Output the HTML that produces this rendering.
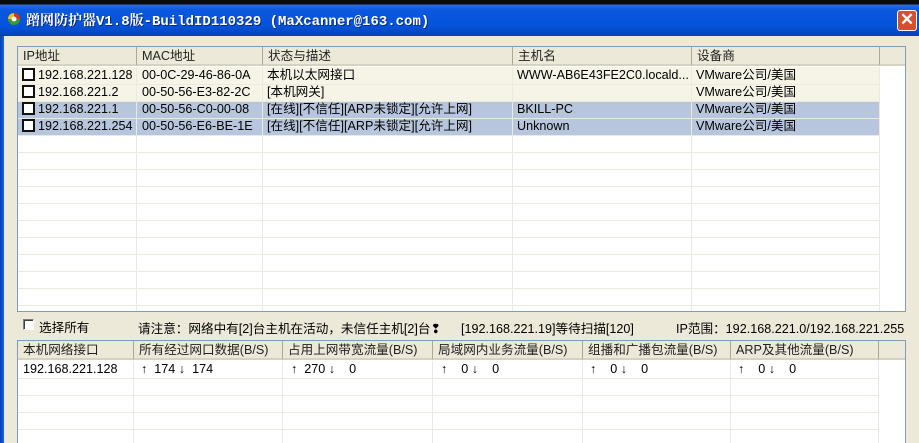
<!DOCTYPE html>
<html><head><meta charset="utf-8"><style>
*{margin:0;padding:0;box-sizing:border-box}
html,body{width:919px;height:443px;overflow:hidden}
body{background:#ECE9D8;position:relative;font-family:"Liberation Sans","Noto Sans CJK SC",sans-serif;font-size:12.6px;color:#000}
.a{position:absolute}
.title{left:0;top:0;width:919px;height:36px;background:linear-gradient(#0A0A0A 0,#0A0A0A 4px,#2B6BE0 5px,#0A58E0 10px,#0553DA 26px,#0445C0 34px,#0C3FA8 36px)}
.lb{left:0;top:36px;width:4px;height:407px;background:linear-gradient(90deg,#0340B8,#1C62D8)}
.tt{left:26px;top:10px;color:#fff;font-family:"Liberation Mono","Noto Serif CJK SC",monospace;font-weight:bold;font-size:14px;text-shadow:1px 1px #0A2A7A;white-space:nowrap}
.close{left:897px;top:10px;width:20px;height:21px;background:#D4502E;border:1px solid #fff;border-radius:3px;color:#fff;font-size:17px;line-height:18px;text-align:center;font-weight:bold}
.list{background:#fff;border:1px solid #7F9DB9}
.hd{position:absolute;height:19px;background:#ECE9D8;border-right:1px solid #ACA899;border-bottom:2px solid #D6D2C2;padding-left:5px;line-height:18px;white-space:nowrap;color:#222}
.row{position:absolute;height:17px;line-height:17px;white-space:nowrap}
.c{position:absolute;top:0;overflow:hidden}
.vl{position:absolute;width:1px;background:#ECE9E0}
.hl{position:absolute;height:1px;background:#ECE9E0}
.cb{display:inline-block;width:13px;height:13px;border:2px solid #111;vertical-align:-2px;margin-right:3px;background:#fff}
</style></head><body>
<div class="a title"></div>
<div class="a lb"></div>
<svg class="a" style="left:7px;top:12px" width="14" height="14"><circle cx="7" cy="7" r="6" fill="#3C9A30"/><path d="M7 1A6 6 0 0 1 13 7H7z" fill="#E03020"/><path d="M1 7A6 6 0 0 1 7 1V7z" fill="#F0C020"/><circle cx="7" cy="7" r="2.5" fill="#fff"/></svg>
<div class="a tt">蹭网防护器V1.8版-BuildID110329 (MaXcanner@163.com)</div>
<div class="a close">✕</div>

<div class="a list" style="left:17px;top:46px;width:889px;height:266px;overflow:hidden">
<div class="hd" style="left:0;top:0;width:119px">IP地址</div>
<div class="hd" style="left:119px;top:0;width:126px">MAC地址</div>
<div class="hd" style="left:245px;top:0;width:250px">状态与描述</div>
<div class="hd" style="left:495px;top:0;width:179px">主机名</div>
<div class="hd" style="left:674px;top:0;width:188px">设备商</div>
<div class="hd" style="left:862px;top:0;width:27px"></div>
<div class="a" style="left:0;top:20px;width:862px;height:34px;background:#F5F4E6"></div>
<div class="a" style="left:0;top:54px;width:862px;height:34px;background:#B8C6DD"></div>
<div class="vl" style="left:118px;top:20px;height:246px"></div>
<div class="vl" style="left:244px;top:20px;height:246px"></div>
<div class="vl" style="left:494px;top:20px;height:246px"></div>
<div class="vl" style="left:673px;top:20px;height:246px"></div>
<div class="vl" style="left:861px;top:20px;height:246px"></div>
<div class="hl" style="left:0;top:37px;width:862px"></div>
<div class="hl" style="left:0;top:54px;width:862px"></div>
<div class="hl" style="left:0;top:71px;width:862px"></div>
<div class="hl" style="left:0;top:88px;width:862px"></div>
<div class="hl" style="left:0;top:105px;width:862px"></div>
<div class="hl" style="left:0;top:122px;width:862px"></div>
<div class="hl" style="left:0;top:139px;width:862px"></div>
<div class="hl" style="left:0;top:156px;width:862px"></div>
<div class="hl" style="left:0;top:173px;width:862px"></div>
<div class="hl" style="left:0;top:190px;width:862px"></div>
<div class="hl" style="left:0;top:207px;width:862px"></div>
<div class="hl" style="left:0;top:224px;width:862px"></div>
<div class="hl" style="left:0;top:241px;width:862px"></div>
<div class="hl" style="left:0;top:258px;width:862px"></div>
<div class="row" style="left:0;top:20px"><div class="c" style="left:4px"><span class="cb"></span>192.168.221.128</div><div class="c" style="left:124px">00-0C-29-46-86-0A</div><div class="c" style="left:249px">本机以太网接口</div><div class="c" style="left:499px">WWW-AB6E43FE2C0.locald...</div><div class="c" style="left:678px">VMware公司/美国</div></div>
<div class="row" style="left:0;top:37px"><div class="c" style="left:4px"><span class="cb"></span>192.168.221.2</div><div class="c" style="left:124px">00-50-56-E3-82-2C</div><div class="c" style="left:249px">[本机网关]</div><div class="c" style="left:678px">VMware公司/美国</div></div>
<div class="row" style="left:0;top:54px"><div class="c" style="left:4px"><span class="cb"></span>192.168.221.1</div><div class="c" style="left:124px">00-50-56-C0-00-08</div><div class="c" style="left:249px">[在线][不信任][ARP未锁定][允许上网]</div><div class="c" style="left:499px">BKILL-PC</div><div class="c" style="left:678px">VMware公司/美国</div></div>
<div class="row" style="left:0;top:71px"><div class="c" style="left:4px"><span class="cb"></span>192.168.221.254</div><div class="c" style="left:124px">00-50-56-E6-BE-1E</div><div class="c" style="left:249px">[在线][不信任][ARP未锁定][允许上网]</div><div class="c" style="left:499px">Unknown</div><div class="c" style="left:678px">VMware公司/美国</div></div>
</div>

<div class="a" style="left:23px;top:319px;width:11px;height:11px;border:1px solid #7F7F7F;border-right-color:#fff;border-bottom-color:#fff;background:#fff;box-shadow:inset 1px 1px #404040"></div>
<div class="a" style="left:39px;top:317px">选择所有</div>
<div class="a" style="left:138px;top:318px;white-space:nowrap">请注意：网络中有[2]台主机在活动，未信任主机[2]台❢</div>
<div class="a" style="left:461px;top:318px;white-space:nowrap">[192.168.221.19]等待扫描[120]</div>
<div class="a" style="left:676px;top:318px;white-space:nowrap">IP范围：192.168.221.0/192.168.221.255</div>

<div class="a list" style="left:17px;top:340px;width:889px;height:110px;overflow:hidden">
<div class="hd" style="left:0;top:0;width:116px">本机网络接口</div>
<div class="hd" style="left:116px;top:0;width:149px">所有经过网口数据(B/S)</div>
<div class="hd" style="left:265px;top:0;width:150px">占用上网带宽流量(B/S)</div>
<div class="hd" style="left:415px;top:0;width:150px">局域网内业务流量(B/S)</div>
<div class="hd" style="left:565px;top:0;width:148px">组播和广播包流量(B/S)</div>
<div class="hd" style="left:713px;top:0;width:148px">ARP及其他流量(B/S)</div>
<div class="hd" style="left:861px;top:0;width:28px"></div>
<div class="vl" style="left:115px;top:20px;height:90px"></div>
<div class="vl" style="left:264px;top:20px;height:90px"></div>
<div class="vl" style="left:414px;top:20px;height:90px"></div>
<div class="vl" style="left:564px;top:20px;height:90px"></div>
<div class="vl" style="left:712px;top:20px;height:90px"></div>
<div class="vl" style="left:860px;top:20px;height:90px"></div>
<div class="hl" style="left:0;top:37px;width:861px"></div>
<div class="hl" style="left:0;top:54px;width:861px"></div>
<div class="hl" style="left:0;top:71px;width:861px"></div>
<div class="hl" style="left:0;top:88px;width:861px"></div>
<div class="hl" style="left:0;top:105px;width:861px"></div>
<div class="row" style="left:0;top:20px"><div class="c" style="left:5px">192.168.221.128</div><div class="c" style="left:123px">↑&nbsp;&nbsp;174 ↓&nbsp;&nbsp;174</div><div class="c" style="left:273px">↑&nbsp;&nbsp;270 ↓&nbsp;&nbsp;&nbsp;&nbsp;0</div><div class="c" style="left:423px">↑&nbsp;&nbsp;&nbsp;&nbsp;0 ↓&nbsp;&nbsp;&nbsp;&nbsp;0</div><div class="c" style="left:572px">↑&nbsp;&nbsp;&nbsp;&nbsp;0 ↓&nbsp;&nbsp;&nbsp;&nbsp;0</div><div class="c" style="left:720px">↑&nbsp;&nbsp;&nbsp;&nbsp;0 ↓&nbsp;&nbsp;&nbsp;&nbsp;0</div></div>
</div>
</body></html>
